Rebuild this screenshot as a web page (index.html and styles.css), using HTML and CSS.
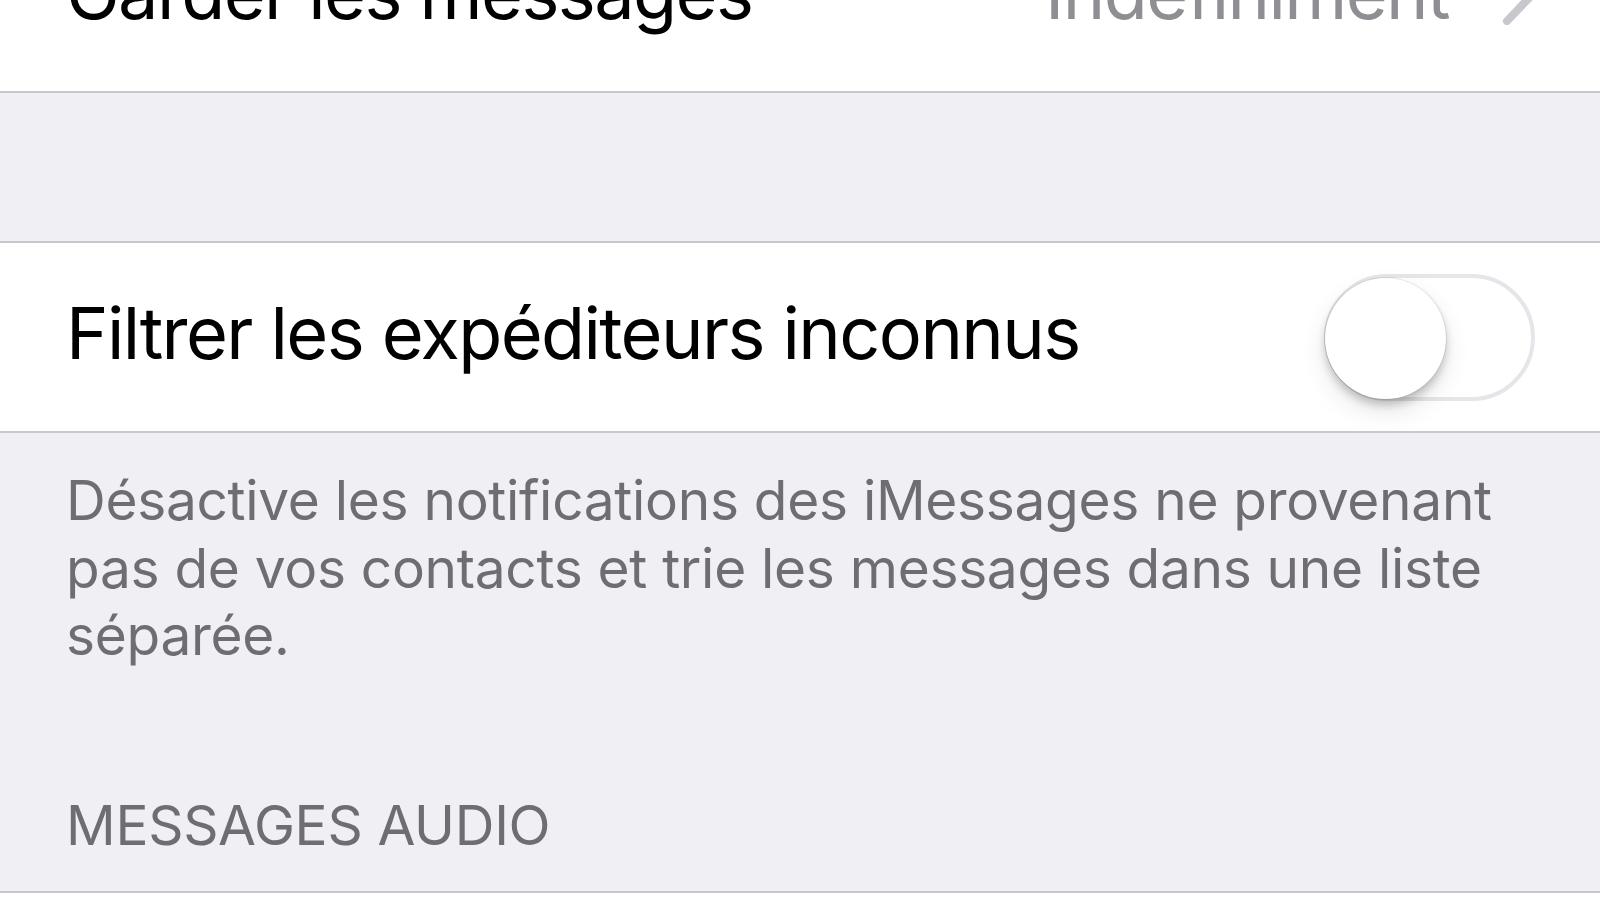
FILE: index.html
```html
<!DOCTYPE html>
<html lang="fr">
<head>
  <meta charset="UTF-8">
  <meta name="viewport" content="width=device-width, initial-scale=1.0">
  <title>Messages</title>
  <link rel="stylesheet" href="styles.css">
</head>
<body>

  <!-- Conversation history group -->
  <div class="group group-first">
    <div class="cell">
      <span class="cell-label">Garder les messages</span>
      <span class="cell-value">Indéfiniment</span>
      <svg class="chevron" width="34" height="56" viewBox="0 0 34 56">
        <polyline points="5,4 28,28 5,52" fill="none" stroke="#c7c7cc" stroke-width="8" stroke-linecap="round" stroke-linejoin="round"/>
      </svg>
    </div>
  </div>

  <div class="spacer"></div>

  <!-- Filtering group -->
  <div class="group">
    <div class="cell">
      <span class="cell-label">Filtrer les expéditeurs inconnus</span>
      <div class="switch" id="filter-switch" onclick="toggleSwitch()">
        <div class="knob"></div>
      </div>
    </div>
  </div>
  <div class="footer">
    Désactive les notifications des iMessages ne provenant
    pas de vos contacts et trie les messages dans une liste
    séparée.
  </div>

  <div class="section-header">MESSAGES AUDIO</div>
  <div class="group group-last"></div>

  <script>
    function toggleSwitch() {
      document.getElementById("filter-switch").classList.toggle("on");
    }
  </script>
</body>
</html>
```

FILE: styles.css
```css
body {
  font-family: Inter, "Noto Sans", sans-serif;
  margin: 0;
  padding: 0;
  background-color: #efeff4;
  width: 1600px;
  height: 900px;
  overflow: hidden;
}

.group {
  background: #ffffff;
  border-top: 2px solid #c8c7cc;
  border-bottom: 2px solid #c8c7cc;
}

.group-first {
  margin-top: -97px;
  border-top: none;
}

.group-last {
  height: 8px;
  border-bottom: none;
}

.cell {
  height: 188px;
  display: flex;
  align-items: center;
  padding: 0 66px 0 66px;
}

.cell-label {
  flex: 1;
  font-size: 72px;
  color: #000000;
  letter-spacing: -1.6px;
  margin-top: -10px;
}

.cell-value {
  font-size: 72px;
  color: #8e8e93;
  letter-spacing: -1.6px;
  margin-top: -10px;
  margin-right: 53px;
}

.chevron {
  margin-right: -2px;
}

.spacer {
  height: 148px;
}

/* On/off switch */
.switch {
  width: 203px;
  height: 119px;
  border: 4px solid #e5e5ea;
  border-radius: 64px;
  background: #ffffff;
  position: relative;
  margin-right: -1px;
  cursor: pointer;
}

.knob {
  position: absolute;
  top: 0;
  left: -3px;
  width: 121px;
  height: 121px;
  border-radius: 50%;
  background: #ffffff;
  box-shadow: 0 0 0 1px rgba(0, 0, 0, 0.08), 0 6px 8px rgba(0, 0, 0, 0.2), 0 12px 26px rgba(0, 0, 0, 0.1);
  transition: left 0.2s ease;
}

.switch.on {
  background: #4cd964;
  border-color: #4cd964;
}

.switch.on .knob {
  left: 85px;
}

.footer {
  padding: 34px 66px 0 66px;
  font-size: 55px;
  line-height: 67.5px;
  letter-spacing: -0.3px;
  color: #6d6d72;
  height: 224px;
}

.section-header {
  padding: 0 66px 32px 66px;
  height: 200px;
  font-size: 55px;
  line-height: 67px;
  letter-spacing: -0.3px;
  color: #6d6d72;
  display: flex;
  align-items: flex-end;
  box-sizing: border-box;
}
```
